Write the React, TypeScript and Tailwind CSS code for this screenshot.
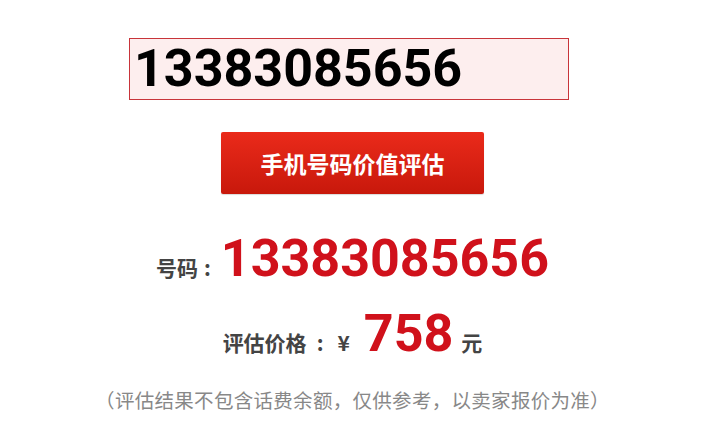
export default function App() {
  const num = "13383085656";
  const roboto = { fontFamily: 'Roboto, "Noto Sans CJK SC", sans-serif' };
  return (
    <div
      className="w-[712px] h-[435px] bg-white flex flex-col items-center pr-[7px]"
      style={{ fontFamily: '"Noto Sans CJK SC", sans-serif' }}
    >
      <div className="mt-[38px] mr-[7px] w-[440px] h-[62px] border border-[#c8343a] bg-[#fdeeee] flex items-center pl-[4px]">
        <span className="text-[52px] font-bold text-black leading-none" style={roboto}>
          {num}
        </span>
      </div>

      <button className="mt-[32px] w-[263px] h-[62px] rounded-[2px] bg-gradient-to-b from-[#ea2a1a] to-[#c8180b] text-white text-[23px] font-bold shadow-[0_1px_1px_rgba(0,0,0,0.15)]">
        手机号码价值评估
      </button>

      <div className="mt-[39px] flex items-baseline">
        <span className="text-[21px] font-bold text-[#444]">号码</span>
        <span className="ml-[6px] mr-[10px] text-[21px] font-bold text-[#444]">:</span>
        <span className="text-[52px] font-bold text-[#d0111b] leading-none" style={roboto}>
          {num}
        </span>
      </div>

      <div className="mt-[23px] flex items-baseline">
        <span className="text-[21px] font-bold text-[#444]">评估价格</span>
        <span className="ml-[10px] text-[21px] font-bold text-[#444]">:</span>
        <span className="ml-[14px] text-[21px] font-bold text-[#444]">¥</span>
        <span className="ml-[14px] mr-[8px] text-[52px] font-bold text-[#d0111b] leading-none" style={roboto}>
          758
        </span>
        <span className="text-[21px] font-bold text-[#444]">元</span>
      </div>

      <div className="mt-[25px] text-[19.5px] text-[#888] tracking-[0.3px]">
        （评估结果不包含话费余额，仅供参考，以卖家报价为准）
      </div>
    </div>
  );
}
